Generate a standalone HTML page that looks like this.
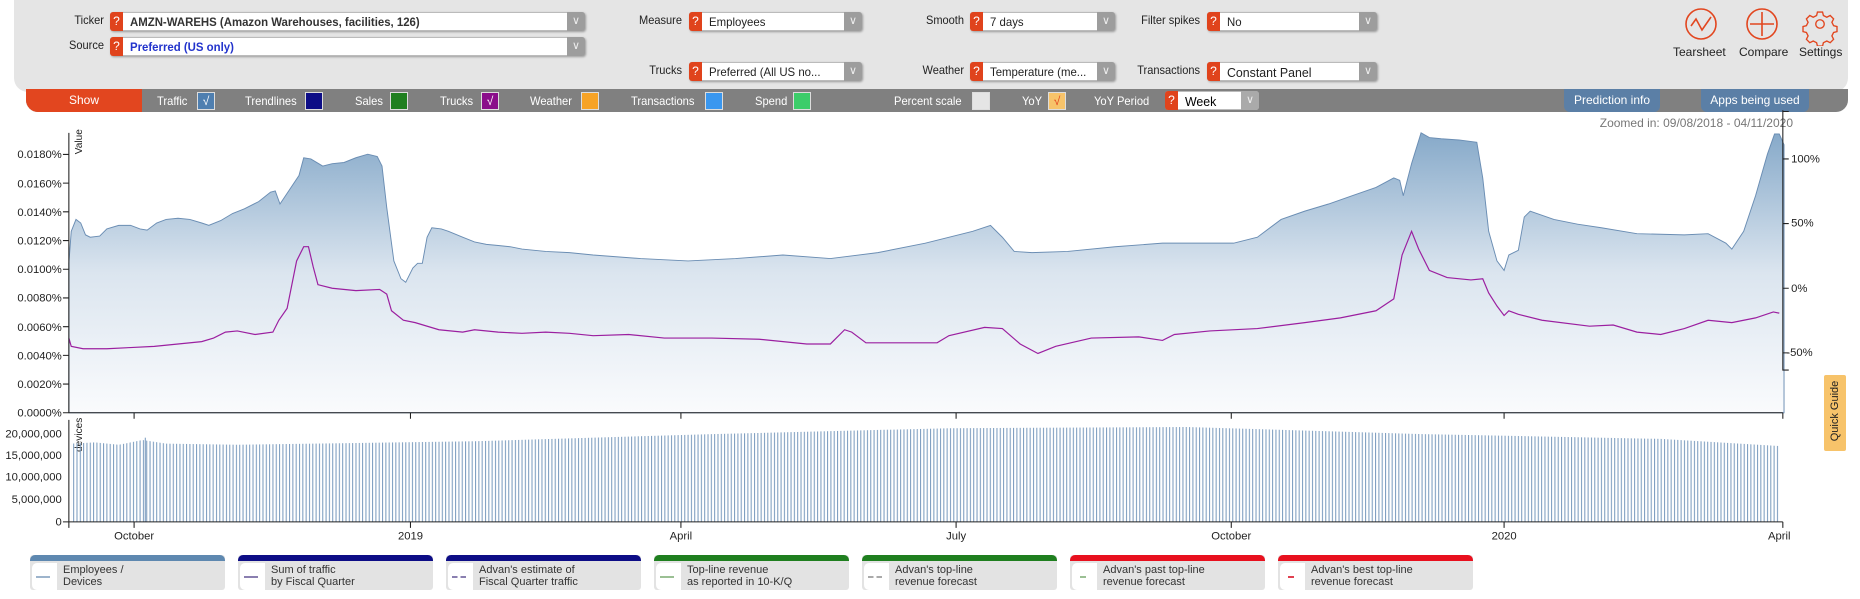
<!DOCTYPE html>
<html><head><meta charset="utf-8"><style>
*{box-sizing:border-box;margin:0;padding:0}
body{width:1860px;height:599px;background:#fff;font-family:"Liberation Sans",Arial,sans-serif;font-size:12px;color:#222;position:relative;overflow:hidden}
.a{position:absolute}
.panel{left:14px;top:0;width:1834px;height:92px;background:#e5e5e5;border-radius:0 0 14px 14px}
.lbl{position:absolute;text-align:right;font-size:12px;color:#222;transform:scaleX(.92);transform-origin:right center}
.sel{position:absolute;height:19px;background:#fff;border:1px solid #bbb;border-radius:3px;box-shadow:1px 1px 2px #999}
.sel .q{position:absolute;left:-1px;top:-1px;width:13px;height:19px;background:#e0431c;color:#fff;font-size:12px;text-align:center;line-height:19px;border-radius:3px 0 0 3px}
.sel .t{position:absolute;left:19px;top:2px;font-size:12px;white-space:nowrap;transform:scaleX(.95);transform-origin:left center}
.sel .ar{position:absolute;right:-1px;top:-1px;width:18px;height:19px;background:#9d9d9d;color:#eee;text-align:center;line-height:18px;font-size:11px;border-radius:0 3px 3px 0}
.bar{left:26px;top:89px;width:1822px;height:23px;background:#808080;border-radius:0 0 12px 12px}
.show{left:26px;top:89px;width:116px;height:23px;background:#e2461f;border-radius:0 0 0 12px;color:#fff;text-align:center;line-height:23px}
.tl{position:absolute;top:94px;color:#fff;font-size:12px;transform:scaleX(.93);transform-origin:left center}
.cb{position:absolute;top:92px;width:18px;height:18px;border:1px solid #ddd;color:#fff;text-align:center;line-height:17px;font-size:12px}
.btn{position:absolute;top:89px;height:23px;background:#5b7fa6;color:#fff;text-align:center;line-height:22px;border-radius:0 0 6px 6px}
.leg{position:absolute;top:555px;width:195px;height:35px;background:#e3e3e3;border-radius:3px}
.leg .top{position:absolute;left:0;top:0;width:100%;height:6px;border-radius:5px 5px 0 0}
.leg .w{position:absolute;left:2px;top:8px;width:25px;height:27px;background:#fff;border-radius:5px 0 0 5px}
.leg .s{position:absolute;left:6px;top:21px;width:14px;height:2px}
.leg .tx{position:absolute;left:33px;top:9px;font-size:11px;line-height:12px;color:#333}
</style></head><body>
<div class="a panel"></div>
<div class="lbl" style="left:40px;top:13px;width:64px">Ticker</div>
<div class="sel" style="left:110px;top:12px;width:475px"><div class="q">?</div><div class="t" style="font-weight:bold;color:#333">AMZN-WAREHS (Amazon Warehouses, facilities, 126)</div><div class="ar">∨</div></div>
<div class="lbl" style="left:40px;top:38px;width:64px">Source</div>
<div class="sel" style="left:110px;top:37px;width:475px"><div class="q">?</div><div class="t" style="font-weight:bold;color:#2233cc">Preferred (US only)</div><div class="ar">∨</div></div>
<div class="lbl" style="left:600px;top:13px;width:82px">Measure</div>
<div class="sel" style="left:689px;top:12px;width:173px"><div class="q">?</div><div class="t">Employees</div><div class="ar">∨</div></div>
<div class="lbl" style="left:600px;top:63px;width:82px">Trucks</div>
<div class="sel" style="left:689px;top:62px;width:173px"><div class="q">?</div><div class="t">Preferred (All US no...</div><div class="ar">∨</div></div>
<div class="lbl" style="left:880px;top:13px;width:84px">Smooth</div>
<div class="sel" style="left:970px;top:12px;width:145px"><div class="q">?</div><div class="t">7 days</div><div class="ar">∨</div></div>
<div class="lbl" style="left:880px;top:63px;width:84px">Weather</div>
<div class="sel" style="left:970px;top:62px;width:145px"><div class="q">?</div><div class="t">Temperature (me...</div><div class="ar">∨</div></div>
<div class="lbl" style="left:1100px;top:13px;width:100px">Filter spikes</div>
<div class="sel" style="left:1207px;top:12px;width:170px"><div class="q">?</div><div class="t">No</div><div class="ar">∨</div></div>
<div class="lbl" style="left:1100px;top:63px;width:100px">Transactions</div>
<div class="sel" style="left:1207px;top:62px;width:170px"><div class="q">?</div><div class="t" style="font-size:13px">Constant Panel</div><div class="ar">∨</div></div>
<svg class="a" style="left:1680px;top:6px" width="170" height="40" viewBox="0 0 170 40">
<g fill="none" stroke="#e2461f" stroke-width="1.6">
<circle cx="21" cy="18" r="15"/><path d="M11 20 L16 13 L22 24 L31 11"/>
<circle cx="82" cy="18" r="15"/><path d="M82 6 V30 M70 18 H94"/>
<g transform="translate(140,18) scale(0.85) translate(-140,-18)">
<path d="M137 4 h6 l1 4 l4 2 l4-2 l4 4 l-2 4 l2 4 l4 1 v6 l-4 1 l-2 4 l2 4 l-4 4 l-4-2 l-4 2 l-1 4 h-6 l-1-4 l-4-2 l-4 2 l-4-4 l2-4 l-2-4 l-4-1 v-6 l4-1 l2-4 l-2-4 l4-4 l4 2 l4-2 z"/><circle cx="140" cy="18" r="5"/></g>
</g></svg>
<div class="a" style="left:1673px;top:45px;font-size:12px">Tearsheet</div>
<div class="a" style="left:1739px;top:45px;font-size:12px">Compare</div>
<div class="a" style="left:1799px;top:45px;font-size:12px">Settings</div>

<div class="a bar"></div>
<div class="a show">Show</div>
<div class="tl" style="left:157px">Traffic</div><div class="cb" style="left:197px;background:#4f7fb0">√</div>
<div class="tl" style="left:245px">Trendlines</div><div class="cb" style="left:305px;background:#0d0d86"></div>
<div class="tl" style="left:355px">Sales</div><div class="cb" style="left:390px;background:#1f7f1f"></div>
<div class="tl" style="left:440px">Trucks</div><div class="cb" style="left:481px;background:#8a0e8a">√</div>
<div class="tl" style="left:530px">Weather</div><div class="cb" style="left:581px;background:#f7a326"></div>
<div class="tl" style="left:631px">Transactions</div><div class="cb" style="left:705px;background:#3a97ef"></div>
<div class="tl" style="left:755px">Spend</div><div class="cb" style="left:793px;background:#3ccd6a"></div>
<div class="tl" style="left:894px">Percent scale</div><div class="cb" style="left:972px;background:#e5e5e5"></div>
<div class="tl" style="left:1022px">YoY</div><div class="cb" style="left:1048px;background:#f7c36a;color:#e2461f">√</div>
<div class="tl" style="left:1094px">YoY Period</div>
<div class="sel" style="left:1165px;top:91px;width:94px;box-shadow:none"><div class="q">?</div><div class="t" style="font-size:13px;color:#000">Week</div><div class="ar" style="background:#aaa">∨</div></div>
<div class="btn" style="left:1564px;width:96px">Prediction info</div>
<div class="btn" style="left:1701px;width:108px">Apps being used</div>
<div class="a" style="left:1560px;top:116px;width:233px;text-align:right;color:#777;font-size:12px">Zoomed in: 09/08/2018 - 04/11/2020</div>

<svg class="a" style="left:0;top:0" width="1860" height="599" viewBox="0 0 1568 505">
<defs>
<linearGradient id="g" x1="0" y1="0" x2="0" y2="1"><stop offset="0" stop-color="#86a9c9"/><stop offset=".5" stop-color="#dbe5ef"/><stop offset="1" stop-color="#fafbfd"/></linearGradient>
<pattern id="p" width="2.8" height="10" patternUnits="userSpaceOnUse"><rect width="0.9" height="10" fill="#7e9ec0"/></pattern>
</defs>
<path fill="url(#g)" stroke="#6a8db3" stroke-width="0.8" d="M58 348 L58 222 L60 195 L64 185 L68 188 L72 198 L76 200 L84 199 L90 193 L100 190 L110 190 L118 193 L124 194 L132 188 L140 185 L150 184 L160 185 L170 188 L176 190 L186 186 L196 180 L206 176 L218 170 L228 162 L232 161 L236 172 L244 160 L252 148 L256 133 L262 134 L272 140 L280 138 L290 137 L300 133 L310 130 L318 132 L322 140 L326 175 L332 220 L338 235 L342 238 L348 226 L352 222 L356 222 L360 200 L364 192 L372 193 L378 195 L390 200 L400 204 L410 206 L420 207 L430 208 L440 210 L460 212 L480 213 L500 215 L540 218 L580 220 L620 218 L660 215 L700 218 L740 213 L780 205 L820 195 L835 190 L845 200 L855 212 L870 213 L900 212 L940 208 L980 205 L1040 205 L1060 200 L1080 185 L1100 178 L1120 172 L1140 165 L1160 158 L1175 150 L1180 152 L1183 165 L1190 138 L1198 112 L1205 116 L1215 117 L1230 118 L1245 120 L1250 150 L1255 195 L1262 220 L1268 228 L1272 215 L1280 211 L1285 183 L1290 178 L1310 185 L1330 189 L1350 192 L1380 197 L1420 198 L1440 197 L1455 205 L1460 210 L1470 195 L1480 165 L1490 130 L1496 113 L1500 113 L1504 122 L1504 348 Z"/>
<polyline fill="none" stroke="#9b1fa0" stroke-width="1" points="58,285 60,292 70,294 90,294 110,293 130,292 150,290 170,288 180,285 190,280 200,279 215,282 230,280 235,270 242,260 250,220 256,208 260,208 264,225 268,240 280,243 300,245 320,244 326,248 330,262 340,270 350,272 370,278 390,280 400,278 420,280 440,281 460,280 480,281 500,283 530,282 560,285 600,285 640,286 680,290 700,290 712,278 718,280 730,289 760,289 790,289 800,283 830,276 845,277 860,290 875,298 890,292 920,285 960,284 980,287 990,282 1020,279 1060,277 1100,272 1130,268 1160,262 1175,252 1182,215 1190,195 1196,210 1205,228 1220,234 1240,236 1250,235 1255,247 1262,258 1268,266 1272,262 1280,265 1300,270 1340,275 1360,274 1380,280 1400,282 1420,277 1440,270 1460,272 1480,268 1495,263 1500,264"/>
<g stroke="#222" stroke-width="0.9" fill="none">
<path d="M58 112 V348 H1503 M53 348 H58 M53 323.8 H58 M53 299.6 H58 M53 275.4 H58 M53 251.2 H58 M53 227 H58 M53 202.8 H58 M53 178.6 H58 M53 154.4 H58 M53 130.2 H58"/>
<path d="M1503 94 H1508 M1503 93 V312 H1508 M1503 134 H1508 M1503 188.5 H1508 M1503 243 H1508 M1503 297.5 H1508"/>
<path d="M113 348 V353 M346 348 V353 M574 348 V353 M806 348 V353 M1038 348 V353 M1268 348 V353 M1503 348 V353"/>
</g>
<g font-size="9.5" fill="#222" text-anchor="end" font-family="Liberation Sans,Arial,sans-serif">
<text x="52" y="351">0.0000%</text><text x="52" y="327">0.0020%</text><text x="52" y="303">0.0040%</text><text x="52" y="279">0.0060%</text><text x="52" y="254">0.0080%</text><text x="52" y="230">0.0100%</text><text x="52" y="206">0.0120%</text><text x="52" y="182">0.0140%</text><text x="52" y="158">0.0160%</text><text x="52" y="133">0.0180%</text>
<text x="52" y="369">20,000,000</text><text x="52" y="387">15,000,000</text><text x="52" y="405">10,000,000</text><text x="52" y="424">5,000,000</text><text x="52" y="443">0</text>
</g>
<g font-size="9.5" fill="#222" font-family="Liberation Sans,Arial,sans-serif">
<text x="1510" y="137">100%</text><text x="1510" y="191">50%</text><text x="1510" y="246">0%</text><text x="1506" y="300">-50%</text>
<text transform="translate(69,130) rotate(-90)" font-size="8.5">Value</text>
<text transform="translate(69,381) rotate(-90)" font-size="8.5">devices</text>
</g>
<g font-size="9.5" fill="#222" text-anchor="middle" font-family="Liberation Sans,Arial,sans-serif">
<text x="113" y="455">October</text><text x="346" y="455">2019</text><text x="574" y="455">April</text><text x="806" y="455">July</text><text x="1038" y="455">October</text><text x="1268" y="455">2020</text><text x="1500" y="455">April</text>
</g>
<path fill="url(#p)" d="M60 440 V374 L80 373 L100 375 L120 371 L140 374 L200 375 L400 372 L600 366 L800 361 L1000 360 L1200 366 L1400 370 L1500 376 V440 Z"/>
<rect x="122" y="369" width="0.9" height="71" fill="#7e9ec0"/>
<path fill="none" stroke="#222" stroke-width="0.9" d="M58 354 V440 H1503 M53 440 H58 M58 440 V445 M113 440 V445 M346 440 V445 M574 440 V445 M806 440 V445 M1038 440 V445 M1268 440 V445 M1503 440 V445"/>
</svg>
<div class="a" style="left:1824px;top:375px;width:22px;height:76px;background:#f7c36a;border-radius:2px"><div style="position:absolute;left:-23px;top:30px;width:68px;transform:rotate(-90deg);font-size:11px;text-align:center">Quick Guide</div></div>

<div class="leg" style="left:30px"><div class="top" style="background:#5e88b0"></div><div class="w"></div><div class="s" style="background:#9db4cc"></div><div class="tx">Employees /<br>Devices</div></div>
<div class="leg" style="left:238px"><div class="top" style="background:#0d0d86"></div><div class="w"></div><div class="s" style="background:#8a7fb0"></div><div class="tx">Sum of traffic<br>by Fiscal Quarter</div></div>
<div class="leg" style="left:446px"><div class="top" style="background:#0d0d86"></div><div class="w"></div><div class="s" style="background:linear-gradient(90deg,#8a7fb0 40%,#fff 40% 60%,#8a7fb0 60%)"></div><div class="tx">Advan's estimate of<br>Fiscal Quarter traffic</div></div>
<div class="leg" style="left:654px"><div class="top" style="background:#1f7f1f"></div><div class="w"></div><div class="s" style="background:#9bc094"></div><div class="tx">Top-line revenue<br>as reported in 10-K/Q</div></div>
<div class="leg" style="left:862px"><div class="top" style="background:#1f7f1f"></div><div class="w"></div><div class="s" style="background:linear-gradient(90deg,#aaa 40%,#fff 40% 60%,#aaa 60%)"></div><div class="tx">Advan's top-line<br>revenue forecast</div></div>
<div class="leg" style="left:1070px"><div class="top" style="background:#e8101e"></div><div class="w"></div><div class="s" style="left:10px;width:6px;background:#9bc094"></div><div class="tx">Advan's past top-line<br>revenue forecast</div></div>
<div class="leg" style="left:1278px"><div class="top" style="background:#e8101e"></div><div class="w"></div><div class="s" style="left:10px;width:6px;background:#e04050"></div><div class="tx">Advan's best top-line<br>revenue forecast</div></div>
</body></html>
